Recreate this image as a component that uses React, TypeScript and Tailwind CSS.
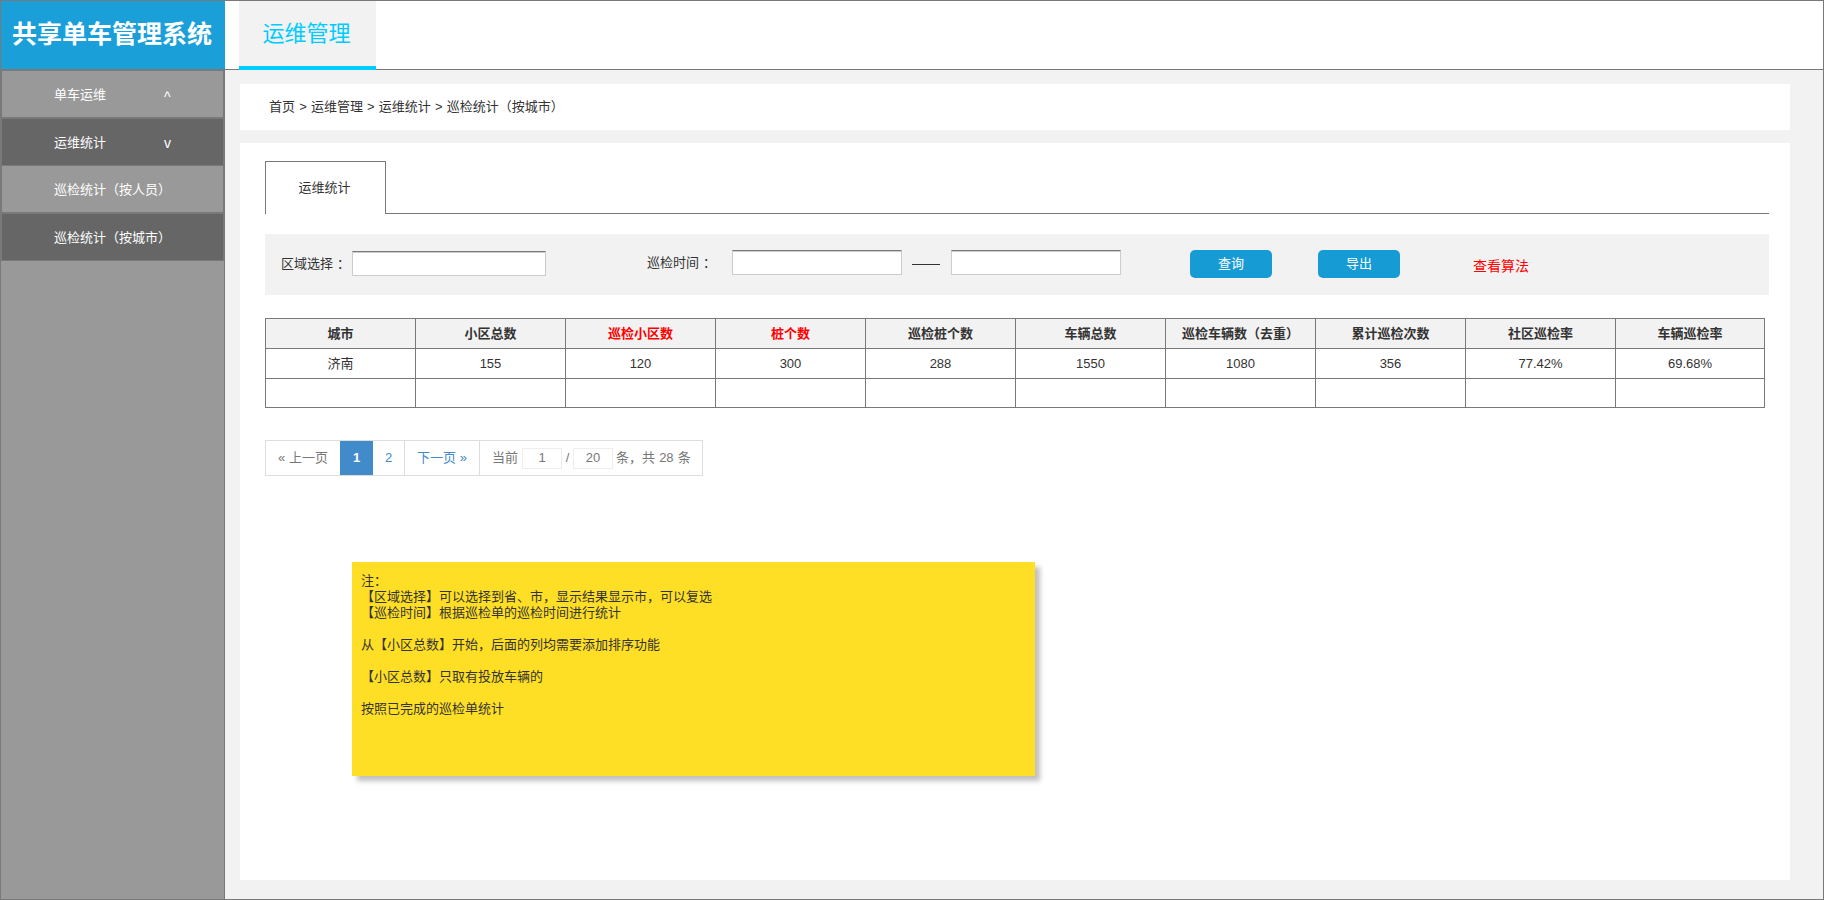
import React from "react";

const heads: { t: string; red?: boolean }[] = [
  { t: "城市" },
  { t: "小区总数" },
  { t: "巡检小区数", red: true },
  { t: "桩个数", red: true },
  { t: "巡检桩个数" },
  { t: "车辆总数" },
  { t: "巡检车辆数（去重）" },
  { t: "累计巡检次数" },
  { t: "社区巡检率" },
  { t: "车辆巡检率" },
];
const row = ["济南", "155", "120", "300", "288", "1550", "1080", "356", "77.42%", "69.68%"];

function SideItem({ text, dark, mark, overlap }: { text: string; dark?: boolean; mark?: string; overlap?: boolean }) {
  return (
    <div
      className={`flex h-[48px] items-center border border-[#797979] pt-[1px] pl-[52px] text-[13px] text-white ${dark ? "bg-[#666666]" : "bg-[#999999]"} ${overlap ? "-mt-px" : ""}`}
    >
      <span className="w-[110px] whitespace-nowrap">{text}</span>
      {mark && (
        <span className={`text-[14px] leading-none ${mark === "^" ? "mt-[5px]" : "mt-[1px]"}`}>{mark}</span>
      )}
    </div>
  );
}

function Field({ className }: { className: string }) {
  return (
    <input
      readOnly
      className={`h-[25px] border border-[#cccccc] border-t-[#797979] bg-white shadow-[inset_0_1px_0_#cccccc] outline-none ${className}`}
    />
  );
}

export default function App() {
  return (
    <div className="box-border flex h-[900px] w-[1824px] flex-col overflow-hidden border border-[#797979] bg-white font-['Liberation_Sans','Noto_Sans_CJK_SC',sans-serif] text-[13px] text-[#333333]">
      <header className="-mt-px box-border flex h-[70px] shrink-0 border-b border-[#797979] bg-white">
        <div className="flex h-[69px] w-[224px] shrink-0 items-center justify-center bg-[#1a9fd9] pr-[2px] text-[25px] font-bold whitespace-nowrap text-white">
          共享单车管理系统
        </div>
        <div className="ml-[14px] box-border flex h-[70px] w-[137px] items-center justify-center border-b-4 border-[#00ccff] bg-[#f2f2f2] pr-[2px] text-[22px] text-[#00ccff]">
          运维管理
        </div>
      </header>
      <div className="flex min-h-0 flex-1">
        <aside className="box-border w-[224px] shrink-0 border-r border-[#797979] bg-[#999999]">
          <SideItem text="单车运维" mark="^" />
          <SideItem text="运维统计" mark="v" dark />
          <SideItem text="巡检统计（按人员）" overlap />
          <SideItem text="巡检统计（按城市）" dark />
        </aside>
        <main className="flex min-w-0 flex-1 flex-col bg-[#f2f2f2] pt-[14px] pr-[33px] pb-[19px] pl-[15px]">
          <div className="flex h-[46px] shrink-0 items-center bg-white pl-[29px] whitespace-pre [word-spacing:0.55px]">
            首页 &gt; 运维管理 &gt; 运维统计 &gt; 巡检统计（按城市）
          </div>
          <section className="mt-[13px] flex-1 bg-white pt-[18px] pr-[21px] pl-[25px]">
            <div className="flex h-[53px]">
              <div className="box-border flex h-[53px] w-[121px] items-center justify-center border border-b-0 border-[#797979] pr-[2px] pb-[1px]">
                运维统计
              </div>
              <div className="flex-1 border-b border-[#797979]" />
            </div>

            <div className="mt-[20px] flex h-[61px] items-start bg-[#f2f2f2]">
              <label className="mt-[17px] ml-[16px] w-[71px] leading-[25px] whitespace-nowrap">
                区域选择<span className="ml-[4px]">：</span>
              </label>
              <Field className="mt-[17px] w-[194px]" />
              <label className="mt-[16px] ml-[101px] w-[85px] leading-[25px] whitespace-nowrap">
                巡检时间<span className="ml-[4px]">：</span>
              </label>
              <Field className="mt-[16px] w-[170px]" />
              <div className="mt-[30px] ml-[10px] h-px w-[28px] bg-[#333333]" />
              <Field className="mt-[16px] ml-[11px] w-[170px]" />
              <button className="mt-[16px] ml-[69px] h-[28px] w-[82px] rounded-[5px] bg-[#169bd5] text-[13px] text-white">
                查询
              </button>
              <button className="mt-[16px] ml-[46px] h-[28px] w-[82px] rounded-[5px] bg-[#169bd5] text-[13px] text-white">
                导出
              </button>
              <span className="mt-[22px] ml-[73px] text-[14px] leading-[20px] text-[#ff0000]">查看算法</span>
            </div>

            <table className="mt-[23px] w-[1500px] table-fixed border-collapse text-center">
              <colgroup>
                {heads.map((h, i) => (
                  <col key={h.t} className={i < 9 ? "w-[150px]" : "w-[149px]"} />
                ))}
              </colgroup>
              <tbody>
                <tr className="h-[30px] bg-[#f2f2f2]">
                  {heads.map((h) => (
                    <th
                      key={h.t}
                      className={`border border-[#797979] p-0 font-bold whitespace-nowrap ${h.red ? "text-[#ff0000]" : ""}`}
                    >
                      {h.t}
                    </th>
                  ))}
                </tr>
                <tr className="h-[30px]">
                  {row.map((c, i) => (
                    <td key={i} className="border border-[#797979] p-0">
                      {c}
                    </td>
                  ))}
                </tr>
                <tr className="h-[29px]">
                  {row.map((_, i) => (
                    <td key={i} className="border border-[#797979] p-0" />
                  ))}
                </tr>
              </tbody>
            </table>

            <nav className="mt-[32px] box-border flex h-[36px] w-[438px] items-stretch border border-[#dddddd] text-[#777777]">
              <div className="flex w-[74px] items-center justify-center">« 上一页</div>
              <div className="flex w-[33px] items-center justify-center bg-[#428bca] font-bold text-white">1</div>
              <div className="flex w-[32px] items-center justify-center border-r border-[#dddddd] text-[#428bca]">2</div>
              <div className="flex w-[75px] items-center justify-center border-r border-[#dddddd] text-[#428bca]">下一页 »</div>
              <div className="flex flex-1 items-center pl-[12px] whitespace-pre">
                <span>当前</span>
                <span className="ml-[4px] box-border flex h-[21px] w-[40px] items-center justify-center border border-[#eeeeee]">1</span>
                <span className="w-[11px] text-center">/</span>
                <span className="box-border flex h-[21px] w-[40px] items-center justify-center border border-[#eeeeee]">20</span>
                <span className="ml-[3px] [word-spacing:0.5px]">条，共 28 条</span>
              </div>
            </nav>

            <div className="mt-[86px] ml-[87px] box-border h-[214px] w-[683px] bg-[#ffdf25] pt-[11px] pl-[9px] leading-[16px] shadow-[5px_5px_5px_rgba(0,0,0,0.25)]">
              <p>注：</p>
              <p>【区域选择】可以选择到省、市，显示结果显示市，可以复选</p>
              <p>【巡检时间】根据巡检单的巡检时间进行统计</p>
              <p>&nbsp;</p>
              <p>从【小区总数】开始，后面的列均需要添加排序功能</p>
              <p>&nbsp;</p>
              <p>【小区总数】只取有投放车辆的</p>
              <p>&nbsp;</p>
              <p>按照已完成的巡检单统计</p>
            </div>
          </section>
        </main>
      </div>
    </div>
  );
}
